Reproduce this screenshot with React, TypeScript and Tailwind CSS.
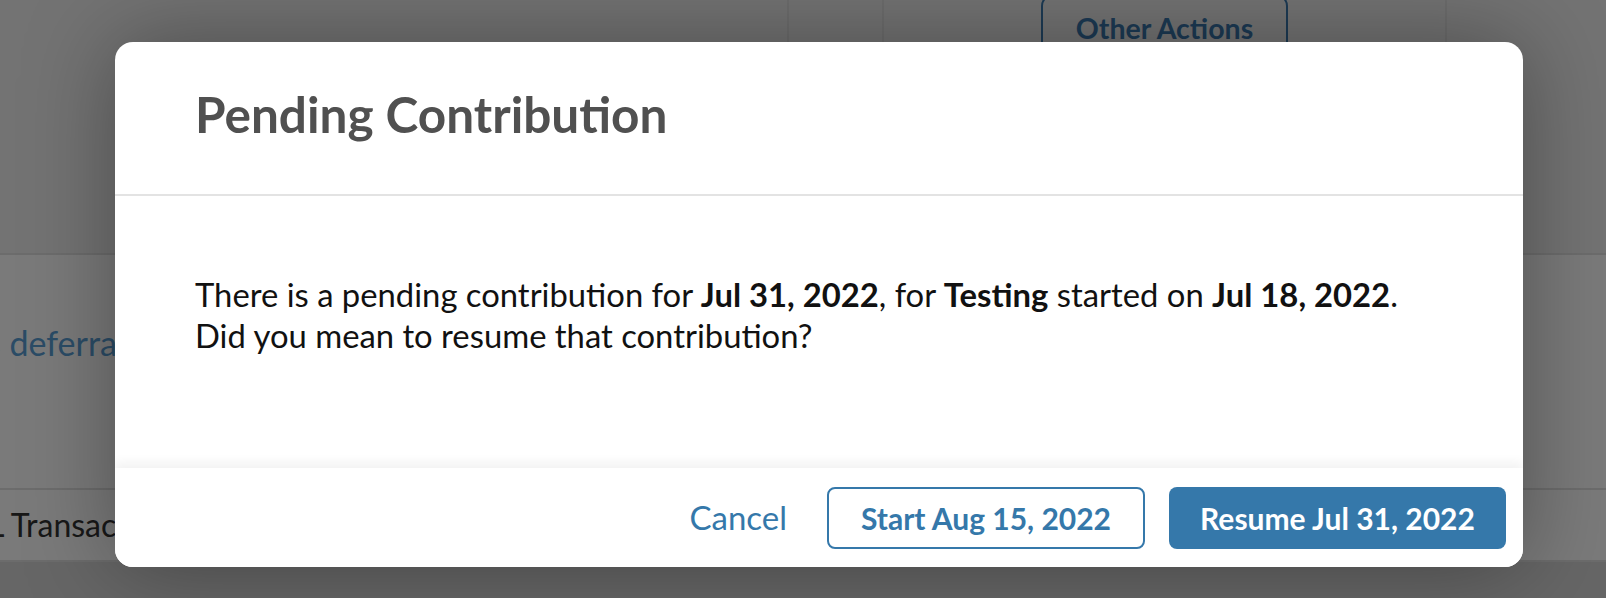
import React from "react";

export default function App() {
  return (
    <div className="relative w-[1606px] h-[598px] overflow-hidden font-['Lato',sans-serif]">
      {/* underlying page */}
      <div className="flex flex-col h-full bg-white">
        <div className="h-[255px] shrink-0 flex bg-[#f1f1f1] border-b-2 border-[#e2e2e2]">
          <div className="w-[789px] border-r-2 border-[#e4e4e4]" />
          <div className="w-[95px] border-r-2 border-[#e4e4e4]" />
          <div className="flex-1 flex justify-center">
            <div className="-mt-[6px] w-[247px] h-[120px] border-2 border-[#3c7ab0] rounded-[12px] pt-[17px] text-center text-[28.5px] leading-[30px] font-bold text-[#3c7ab0]">
              Other Actions
            </div>
          </div>
          <div className="w-[161px] border-l-2 border-[#e4e4e4]" />
        </div>
        <div className="h-[235px] shrink-0 border-b-2 border-[#e2e2e2] pt-[68px] flex items-start">
          <span className="-ml-[14px] text-[34px] leading-[40px] text-[#5aa0d6]">s deferral</span>
        </div>
        <div className="h-[72px] shrink-0 border-b-2 border-[#e2e2e2] pt-[15px]">
          <span className="block -ml-[12px] text-[32px] leading-[40px] text-[#333333]">L Transactions</span>
        </div>
        <div className="flex-1 bg-[#d6d6d6]" />
      </div>

      {/* overlay */}
      <div className="absolute inset-0 bg-black/[0.52]" />

      {/* modal */}
      <div className="absolute left-[115px] top-[42px] w-[1408px] h-[525px] rounded-[18px] bg-white overflow-hidden flex flex-col shadow-[0_0_90px_rgba(0,0,0,0.35)]">
        <div className="h-[154px] shrink-0 border-b-2 border-[#e3e3e3] pl-[80px] pt-[47px]">
          <h2 className="text-[49.5px] leading-[50px] font-bold text-[#505050]">Pending Contribution</h2>
        </div>
        <div className="flex-1 pl-[80px] pt-[78px] text-[32.8px] leading-[41px] text-[#111111]">
          <p>
            There is a pending contribution for <b>Jul 31, 2022</b>, for <b>Testing</b> started on{" "}
            <b>Jul 18, 2022</b>.
            <br />
            Did you mean to resume that contribution?
          </p>
        </div>
        <div className="relative h-[99px] shrink-0 flex items-start justify-end pt-[19px] pr-[17px] bg-white shadow-[0_-6px_10px_rgba(0,0,0,0.05)]">
          <button className="h-[62px] mr-[40px] text-[33px] text-[#3578aa]">Cancel</button>
          <button className="w-[318px] h-[62px] mr-[24px] rounded-[8px] border-2 border-[#3578aa] text-[30px] font-bold text-[#3578aa]">
            Start Aug 15, 2022
          </button>
          <button className="w-[337px] h-[62px] rounded-[8px] bg-[#3578aa] text-[30px] font-bold text-white">
            Resume Jul 31, 2022
          </button>
        </div>
      </div>
    </div>
  );
}
